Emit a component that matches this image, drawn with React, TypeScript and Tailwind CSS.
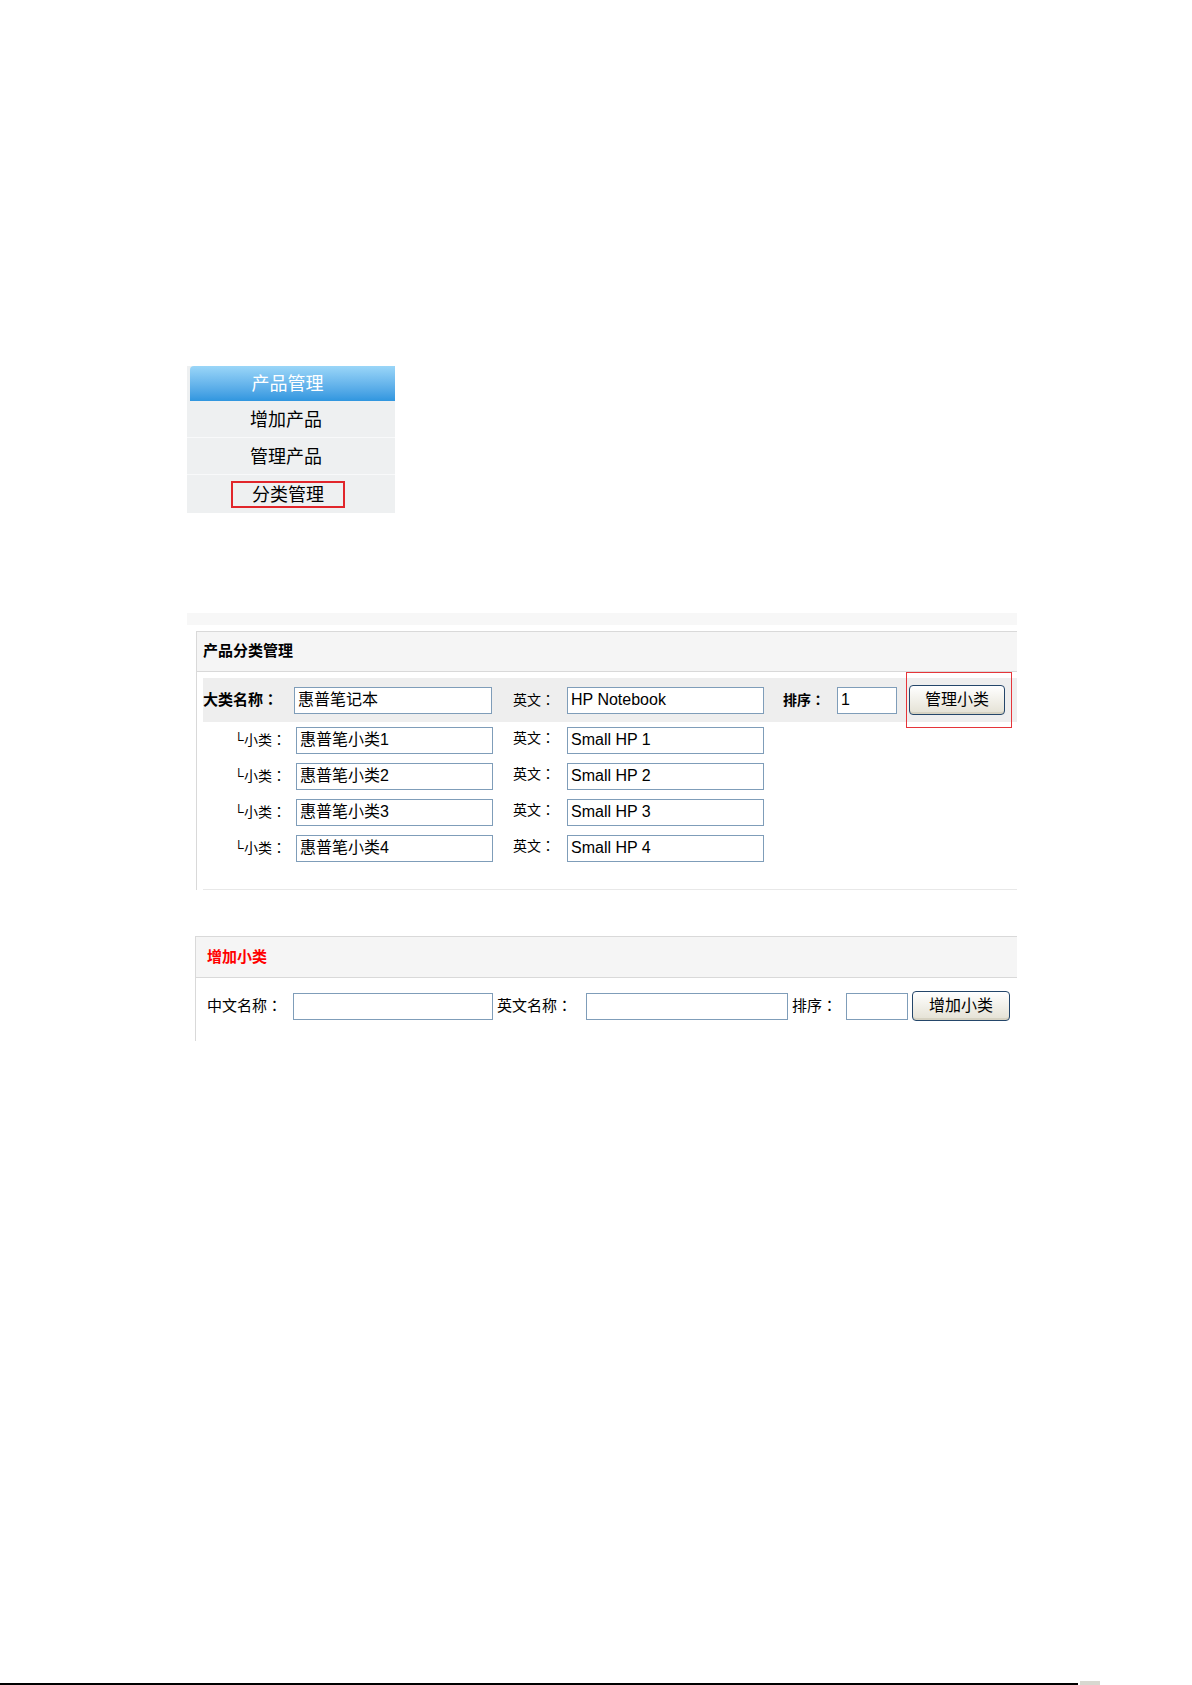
import React from "react";

const font = "font-['Liberation_Sans','Noto_Sans_CJK_SC',sans-serif]";

// full-width colon drawn centred, as in the screenshot's SimSun rendering
function Colon() {
  return <span className="font-['Noto_Sans_CJK_JP',sans-serif]">：</span>;
}

function TextBox({ value, className }: { value?: string; className: string }) {
  return (
    <div
      className={`h-[27px] border border-[#7f9db9] bg-white px-[3px] flex items-center text-[16px] leading-none text-black ${className}`}
    >
      {value}
    </div>
  );
}

function XpButton({ label, className = "w-[96px]" }: { label: string; className?: string }) {
  return (
    <div
      className={`h-[30px] rounded-[4px] border border-[#24466a] bg-linear-to-b from-white to-[#e4e1d4] flex items-center justify-center text-[16px] leading-none text-black shadow-[inset_0_-2px_0_#d6d2c2] ${className}`}
    >
      {label}
    </div>
  );
}

const subs = [
  { cn: "惠普笔小类1", en: "Small HP 1" },
  { cn: "惠普笔小类2", en: "Small HP 2" },
  { cn: "惠普笔小类3", en: "Small HP 3" },
  { cn: "惠普笔小类4", en: "Small HP 4" },
];

function SideMenu() {
  const items = ["增加产品", "管理产品"];
  return (
    <div className="ml-[187px] w-[208px] bg-[#eef0f1] text-[18px] leading-none">
      <div className="ml-[3px] h-[35px] rounded-tl-[4px] bg-linear-to-b from-[#9ad6f8] to-[#2f96df] flex items-center justify-center pr-[10px] text-white">
        产品管理
      </div>
      {items.map((it) => (
        <div
          key={it}
          className="h-[37px] border-b border-[#f8f9fa] flex items-center justify-center pr-[10px] pt-[2px] text-black"
        >
          {it}
        </div>
      ))}
      <div className="h-[38px] flex items-center justify-center pr-[6px] text-black">
        <span className="w-[114px] h-[27px] border-2 border-[#e1262b] flex items-center justify-center pt-[2px]">
          分类管理
        </span>
      </div>
    </div>
  );
}

function CategoryPanel() {
  return (
    <div>
      <div className="ml-[187px] w-[830px] h-[12px] bg-[#f7f7f7]" />
      <div className="mt-[6px] ml-[196px] w-[821px] border-l border-t border-[#d9d9d9]">
        <div className="h-[40px] bg-[#f5f5f5] border-b border-[#d9d9d9] pl-[6px] flex items-center text-[15px] font-bold text-black">
          产品分类管理
        </div>
        <div className="pt-[6px] pl-[6px]">
          <div className="h-[44px] bg-[#eeeeee] flex items-center text-[15px] text-black">
            <span className="w-[91px] font-bold">
              大类名称<Colon />
            </span>
            <TextBox value="惠普笔记本" className="w-[198px]" />
            <span className="ml-[21px] w-[54px] text-[14px]">
              英文<Colon />
            </span>
            <TextBox value="HP Notebook" className="w-[197px]" />
            <span className="ml-[19px] w-[54px] text-[14px] font-bold">
              排序<Colon />
            </span>
            <TextBox value="1" className="w-[60px]" />
            <div className="relative ml-[12px]">
              <XpButton label="管理小类" />
              <div className="absolute -left-[3px] -right-[7px] -top-[13px] -bottom-[13px] border border-[#e5353a]" />
            </div>
          </div>
          {subs.map((s) => (
            <div key={s.cn} className="h-[36px] flex items-center text-[15px] text-black">
              <span className="w-[93px] pr-[10px] text-right text-[14px]">
                └小类<Colon />
              </span>
              <TextBox value={s.cn} className="w-[197px]" />
              <span className="ml-[20px] w-[54px] text-[14px] -mt-[5px]">
                英文<Colon />
              </span>
              <TextBox value={s.en} className="w-[197px]" />
            </div>
          ))}
          <div className="h-[23px]" />
          <div className="h-px bg-[#e8e8e8]" />
        </div>
      </div>
    </div>
  );
}

function AddPanel() {
  return (
    <div className="mt-[46px] ml-[195px] w-[822px] border-l border-t border-[#d9d9d9]">
      <div className="h-[41px] bg-[#f5f5f5] border-b border-[#d9d9d9] pl-[11px] flex items-center text-[15px] font-bold text-[#ff0000]">
        增加小类
      </div>
      <div className="h-[63px] pt-[13px] pl-[11px]">
        <div className="flex items-center text-[15px] text-black">
          <span className="w-[86px]">
            中文名称<Colon />
          </span>
          <TextBox className="w-[200px]" />
          <span className="ml-[4px] w-[89px]">
            英文名称<Colon />
          </span>
          <TextBox className="w-[202px]" />
          <span className="ml-[4px] w-[54px]">
            排序<Colon />
          </span>
          <TextBox className="w-[62px]" />
          <div className="ml-[4px]">
            <XpButton label="增加小类" className="w-[98px]" />
          </div>
        </div>
      </div>
    </div>
  );
}

export default function App() {
  return (
    <div className={`w-[1192px] h-[1685px] bg-white flex flex-col ${font}`}>
      <div className="h-[366px]" />
      <SideMenu />
      <div className="h-[100px]" />
      <CategoryPanel />
      <AddPanel />
      <div className="mt-auto flex items-end">
        <div className="w-[1078px] h-[2px] bg-black" />
        <div className="ml-[2px] w-[20px] h-[4px] bg-[#d8d8d0]" />
      </div>
    </div>
  );
}
